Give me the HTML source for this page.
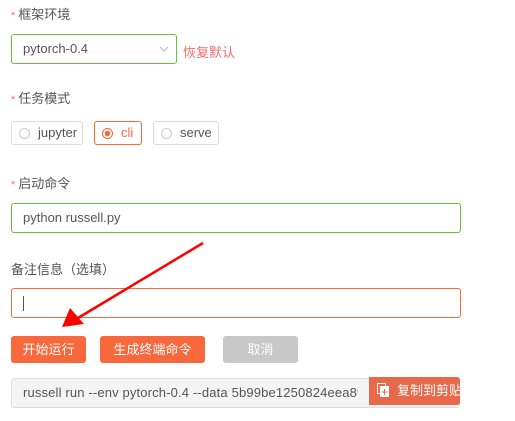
<!DOCTYPE html><html><head><meta charset="utf-8"><style>
body{margin:0;width:515px;height:421px;background:#fff;font-family:"Liberation Sans","Noto Sans CJK SC",sans-serif;position:relative;overflow:hidden;color:#555}
.a{position:absolute}
.lab{font-size:13px;color:#555}
.lab i{color:#f56c6c;font-style:normal;font-size:11px;margin-right:3px}
.box{position:absolute;box-sizing:border-box;border:1px solid #ddd;border-radius:3px;font-size:13px;color:#555}
.btn{position:absolute;height:27px;line-height:27px;text-align:center;color:#fff;font-size:13px;border-radius:3px;background:#f8683d}
.r{height:24px;line-height:22px;font-size:13px;padding-left:26px}
.r:before{content:"";position:absolute;left:7px;top:6px;width:9px;height:9px;border:1px solid #ccc;border-radius:50%}
.r.on:before{border-color:#f8683d;background:radial-gradient(circle,#f8683d 0 2.5px,#fff 3px)}
</style></head><body>
<div class="a lab" style="left:11px;top:4px"><i>*</i>框架环境</div>
<div class="box" style="left:11px;top:34px;width:166px;height:30px;border-color:#67c23a;line-height:28px;padding-left:11px">pytorch-0.4
<svg class="a" style="left:147px;top:10px" width="10" height="8"><path d="M1 2l4 4 4-4" fill="none" stroke="#bbb"/></svg></div>
<div class="a" style="left:183px;top:42px;font-size:13px;color:#f56c6c">恢复默认</div>
<div class="a lab" style="left:11px;top:88px"><i>*</i>任务模式</div>
<div class="box r" style="left:11px;top:121px;width:72px">jupyter</div>
<div class="box r on" style="left:94px;top:121px;width:48px;border-color:#f8683d;color:#f8683d">cli</div>
<div class="box r" style="left:153px;top:121px;width:66px">serve</div>
<div class="a lab" style="left:11px;top:173px"><i>*</i>启动命令</div>
<div class="box" style="left:11px;top:203px;width:450px;height:30px;border-color:#67c23a;line-height:28px;padding-left:11px">python russell.py</div>
<div class="a lab" style="left:11px;top:259px">备注信息（选填）</div>
<div class="box" style="left:11px;top:288px;width:450px;height:30px;border-color:#f8683d"><div class="a" style="left:11px;top:7px;width:1px;height:15px;background:#555"></div></div>
<div class="btn" style="left:11px;top:336px;width:75px">开始运行</div>
<div class="btn" style="left:100px;top:336px;width:105px">生成终端命令</div>
<div class="btn" style="left:223px;top:336px;width:75px;background:#c8c8c8">取消</div>
<div class="box" style="left:11px;top:378px;width:449px;height:30px;background:#f4f4f4"></div>
<div class="a" style="left:23px;top:379px;width:335px;height:28px;line-height:28px;font-size:13px;overflow:hidden;white-space:nowrap;letter-spacing:0.15px">russell run --env pytorch-0.4 --data 5b99be1250824eea898</div>
<div class="a" style="left:369px;top:378px;width:1px;height:30px;background:#ddd"></div>
<div class="btn" style="left:369px;top:377px;width:91px;height:28px;line-height:28px;background:#e8684a;border-radius:0 3px 3px 0;text-align:left;padding-left:28px;box-sizing:border-box;overflow:hidden;white-space:nowrap">复制到剪贴板</div>
<svg class="a" style="left:377px;top:383px" width="12" height="14"><rect x="0.5" y="0.5" width="8" height="10" fill="none" stroke="#fff"/><rect x="3" y="3" width="9" height="11" fill="#fff"/><path d="M7.5 6v6M4.5 9h6" stroke="#e8684a"/></svg>
<svg class="a" style="left:0;top:0" width="515" height="421"><line x1="203" y1="243" x2="78" y2="318" stroke="#f00" stroke-width="2.5"/><polygon points="62,327 70,308 84,324" fill="#f00"/></svg>
</body></html>
